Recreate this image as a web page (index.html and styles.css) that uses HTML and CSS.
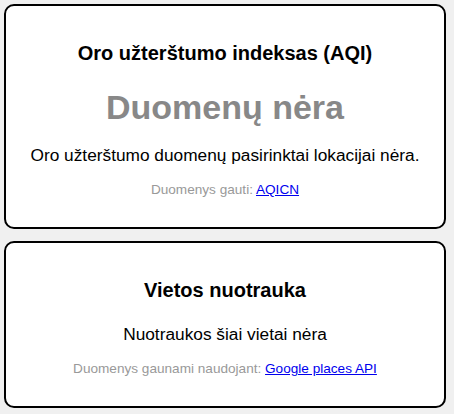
FILE: index.html
```html
<!DOCTYPE html>
<html lang="lt">
<head>
<meta charset="utf-8">
<title>Vieta</title>
<link rel="stylesheet" href="styles.css">
</head>
<body>
<main class="page">
  <section class="card">
    <h3 class="card-title">Oro užterštumo indeksas (AQI)</h3>
    <div class="nodata">Duomenų nėra</div>
    <p class="msg">Oro užterštumo duomenų pasirinktai lokacijai nėra.</p>
    <p class="source">Duomenys gauti: <a href="#">AQICN</a></p>
  </section>
  <section class="card">
    <h3 class="card-title">Vietos nuotrauka</h3>
    <p class="msg msg-photo">Nuotraukos šiai vietai nėra</p>
    <p class="source">Duomenys gaunami naudojant: <a href="#">Google places API</a></p>
  </section>
</main>
</body>
</html>
```

FILE: styles.css
```css
html, body {
  margin: 0;
  padding: 0;
  background: #f0f0f0;
}

body {
  font-family: "Liberation Sans", Arial, sans-serif;
  color: #000;
}

.page {
  display: flex;
  flex-direction: column;
  gap: 12px;
  padding: 4px 8px 4px 4px;
}

.card {
  background: #fff;
  border: 2px solid #000;
  border-radius: 10px;
  padding: 16px 16px 16px;
  text-align: center;
}

.card-title {
  font-size: 20px;
  line-height: 23px;
  font-weight: bold;
  margin: 20px 0 0;
}

.nodata {
  font-size: 34px;
  line-height: 39px;
  font-weight: bold;
  color: #888;
  margin-top: 23px;
}

.msg {
  font-size: 17.3px;
  line-height: 20px;
  margin: 18px 0 0;
}

.msg-photo {
  margin-top: 22px;
}

.source {
  font-size: 13.6px;
  line-height: 16px;
  color: #999;
  margin: 17px 0 13px;
}

.source a {
  color: #0000ee;
  text-decoration: underline;
}
```
